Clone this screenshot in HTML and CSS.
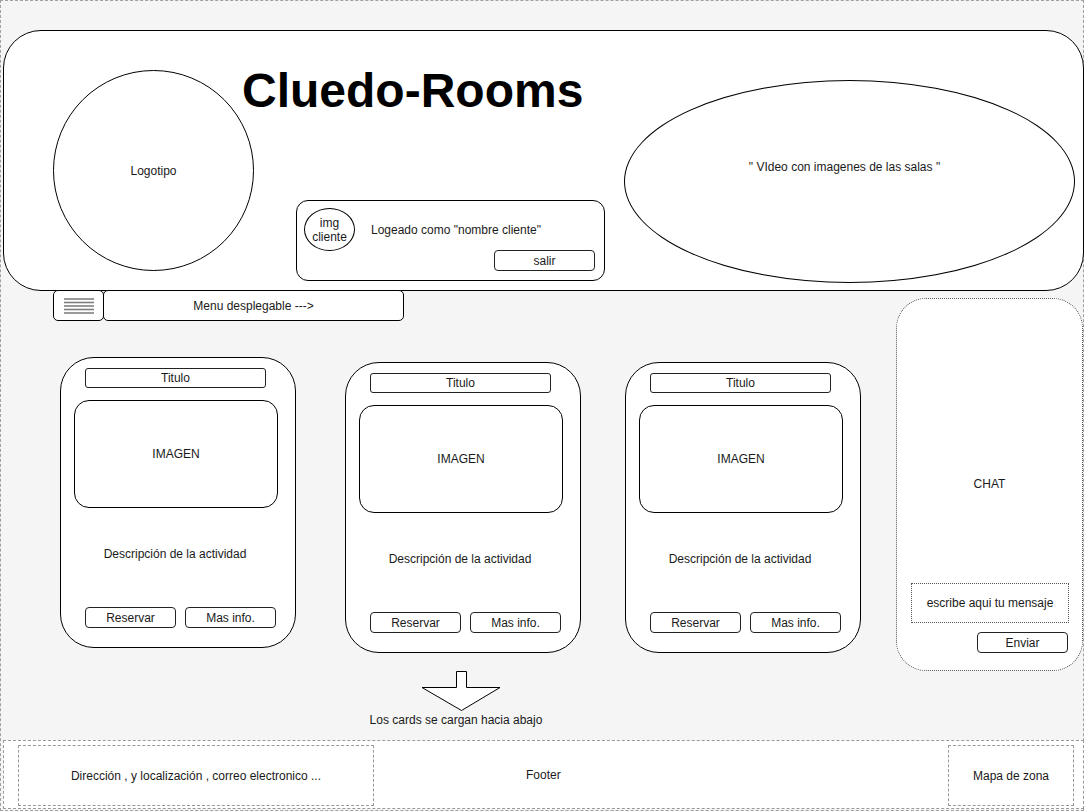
FILE: index.html
```html
<!DOCTYPE html>
<html>
<head>
  <title>Cluedo-Rooms</title>
  <meta charset="UTF-8">
  <link rel="stylesheet" href="styles.css">
</head>
<body>
  <div class="page">
    <!-- Cabecera -->
    <header class="top">
      <div class="logo">Logotipo</div>
      <div class="middle">
        <h1>Cluedo-Rooms</h1>
        <div class="login">
          <div class="login-row">
            <div class="avatar">img<br>cliente</div>
            <span class="login-text">Logeado como "nombre cliente"</span>
          </div>
          <div class="btn salir">salir</div>
        </div>
      </div>
      <div class="video">" VIdeo con imagenes de las salas "</div>
    </header>

    <div class="main">
      <div class="left">
        <!-- Menu -->
        <nav class="nav">
          <div class="burger">
            <svg width="32" height="18" viewBox="0 0 32 18">
              <g stroke="#808080" stroke-width="1.6">
                <line x1="1" y1="2" x2="31" y2="2"/>
                <line x1="1" y1="5.5" x2="31" y2="5.5"/>
                <line x1="1" y1="9" x2="31" y2="9"/>
                <line x1="1" y1="12.5" x2="31" y2="12.5"/>
                <line x1="1" y1="16" x2="31" y2="16"/>
              </g>
            </svg>
          </div>
          <div class="menu">Menu desplegable ---&gt;</div>
        </nav>

        <!-- Cards -->
        <div class="cards">
          <div class="card first">
            <div class="card-title">Titulo</div>
            <div class="card-img">IMAGEN</div>
            <p class="card-desc">Descripción de la actividad</p>
            <div class="card-btns">
              <div class="btn">Reservar</div>
              <div class="btn">Mas info.</div>
            </div>
          </div>
          <div class="card second">
            <div class="card-title">Titulo</div>
            <div class="card-img">IMAGEN</div>
            <p class="card-desc">Descripción de la actividad</p>
            <div class="card-btns">
              <div class="btn">Reservar</div>
              <div class="btn">Mas info.</div>
            </div>
          </div>
          <div class="card third">
            <div class="card-title">Titulo</div>
            <div class="card-img">IMAGEN</div>
            <p class="card-desc">Descripción de la actividad</p>
            <div class="card-btns">
              <div class="btn">Reservar</div>
              <div class="btn">Mas info.</div>
            </div>
          </div>
        </div>

        <div class="more">
          <svg class="arrow" width="80" height="42" viewBox="0 0 80 42">
            <path d="M35.5 1.5 H45.5 V17.5 H79 L40.5 40.5 L1 17.5 H35.5 Z" fill="#fff" stroke="#000" stroke-width="1"/>
          </svg>
          <p>Los cards se cargan hacia abajo</p>
        </div>
      </div>

      <!-- Chat -->
      <aside class="chat">
        <div class="chat-title">CHAT</div>
        <div class="chat-input">escribe aqui tu mensaje</div>
        <div class="btn enviar">Enviar</div>
      </aside>
    </div>

    <!-- Footer -->
    <footer class="footer">
      <div class="foot-box address">Dirección , y localización , correo electronico ...</div>
      <div class="foot-label">Footer</div>
      <div class="foot-box map">Mapa de zona</div>
    </footer>
  </div>
</body>
</html>
```

FILE: styles.css
```css
/* Base */
body {
  margin: 0;
  font-family: "Liberation Sans", Arial, sans-serif;
  font-size: 12px;
  color: #1a1a1a;
}

.page {
  width: 1084px;
  height: 811px;
  box-sizing: border-box;
  border: 1px dashed #a0a0a0;
  background-color: #f5f5f5;
  padding-top: 29px;
}

/* Botones genericos */
.btn {
  box-sizing: border-box;
  width: 91px;
  height: 21px;
  border: 1px solid #222;
  border-radius: 4px;
  background-color: #fff;
  display: flex;
  justify-content: center;
  align-items: center;
}

/* Cabecera */
.top {
  box-sizing: border-box;
  width: 1081px;
  height: 261px;
  margin-left: 2px;
  border: 1px solid #000;
  border-radius: 38px;
  background-color: #fff;
  display: flex;
  align-items: flex-start;
}

.logo {
  box-sizing: border-box;
  width: 201px;
  height: 201px;
  margin: 39px 0 0 49px;
  border: 1px solid #000;
  border-radius: 50%;
  display: flex;
  justify-content: center;
  align-items: center;
}

.middle {
  width: 370px;
  flex-shrink: 0;
}

.middle h1 {
  margin: 36px 0 0 -12px;
  font-size: 48px;
  line-height: 48px;
  font-weight: bold;
  color: #000;
}

.login {
  box-sizing: border-box;
  width: 309px;
  height: 81px;
  margin: 85px 0 0 42px;
  border: 1px solid #000;
  border-radius: 12px;
  padding-top: 7px;
  display: flex;
  flex-direction: column;
}

.login-row {
  display: flex;
  align-items: flex-start;
}

.avatar {
  box-sizing: border-box;
  width: 51px;
  height: 43px;
  margin-left: 7px;
  border: 1px solid #000;
  border-radius: 50%;
  display: flex;
  justify-content: center;
  align-items: center;
  text-align: center;
  line-height: 14px;
}

.login-text {
  margin: 15px 0 0 16px;
  line-height: 14px;
}

.salir {
  width: 101px;
  align-self: flex-end;
  margin: -1px 9px 0 0;
}

.video {
  box-sizing: border-box;
  width: 451px;
  height: 203px;
  margin-top: 49px;
  border: 1px solid #000;
  border-radius: 50%;
  padding: 0 10px 29px 0;
  display: flex;
  justify-content: center;
  align-items: center;
}

/* Zona principal */
.main {
  height: 450px;
  margin-top: -1px;
  display: flex;
  align-items: flex-start;
}

.left {
  flex: 1;
  padding-left: 52px;
}

.nav {
  display: flex;
}

.burger,
.menu {
  box-sizing: border-box;
  height: 31px;
  border: 1px solid #000;
  border-radius: 5px;
  background-color: #fff;
  display: flex;
  justify-content: center;
  align-items: center;
}

.burger {
  width: 51px;
}

.burger svg {
  display: block;
  margin-left: 1px;
}

.menu {
  width: 301px;
  margin-left: -1px;
}

/* Cards */
.cards {
  display: flex;
  align-items: flex-start;
  margin-top: 36px;
}

.card {
  box-sizing: border-box;
  width: 236px;
  height: 291px;
  border: 1px solid #000;
  border-radius: 34px;
  background-color: #fff;
  padding-top: 10px;
}

.card.first {
  margin-left: 7px;
}

.card.second {
  margin: 5px 0 0 49px;
}

.card.third {
  margin: 5px 0 0 44px;
}

.card-title {
  box-sizing: border-box;
  width: 181px;
  height: 20px;
  margin-left: 24px;
  border: 1px solid #222;
  border-radius: 3px;
  text-align: center;
  line-height: 18px;
}

.card-img {
  box-sizing: border-box;
  width: 204px;
  height: 108px;
  margin: 12px 0 0 13px;
  border: 1px solid #000;
  border-radius: 15px;
  display: flex;
  justify-content: center;
  align-items: center;
}

.card-desc {
  margin: 39px 0 0;
  line-height: 14px;
  text-align: center;
  padding-right: 6px;
}

.card-btns {
  display: flex;
  gap: 9px;
  margin: 46px 0 0 24px;
}

/* Flecha "cargar mas" */
.more {
  width: 300px;
  margin: 17px 0 0 253px;
  text-align: center;
}

.arrow {
  display: block;
  margin-left: 115px;
}

.more p {
  margin: 1px 0 0;
  line-height: 14px;
}

/* Chat */
.chat {
  box-sizing: border-box;
  width: 187px;
  height: 373px;
  margin-top: 8px;
  border: 1px dotted #555;
  border-radius: 30px;
  background-color: #fff;
  display: flex;
  flex-direction: column;
}

.chat-title {
  margin-top: 178px;
  line-height: 14px;
  text-align: center;
}

.chat-input {
  box-sizing: border-box;
  width: 158px;
  height: 40px;
  margin: 92px 0 0 14px;
  border: 1px dotted #555;
  display: flex;
  justify-content: center;
  align-items: center;
}

.enviar {
  align-self: flex-end;
  margin: 9px 14px 0 0;
}

/* Footer */
.footer {
  box-sizing: border-box;
  width: 1081px;
  height: 69px;
  margin-left: 2px;
  border: 1px dashed #999;
  background-color: #fff;
  padding-top: 4px;
  display: flex;
  align-items: flex-start;
}

.foot-box {
  box-sizing: border-box;
  height: 61px;
  border: 1px dashed #999;
  display: flex;
  justify-content: center;
  align-items: center;
}

.address {
  width: 356px;
  margin-left: 14px;
}

.foot-label {
  align-self: center;
  margin: -4px 0 0 152px;
}

.map {
  width: 126px;
  margin: 0 9px 0 auto;
}
```
